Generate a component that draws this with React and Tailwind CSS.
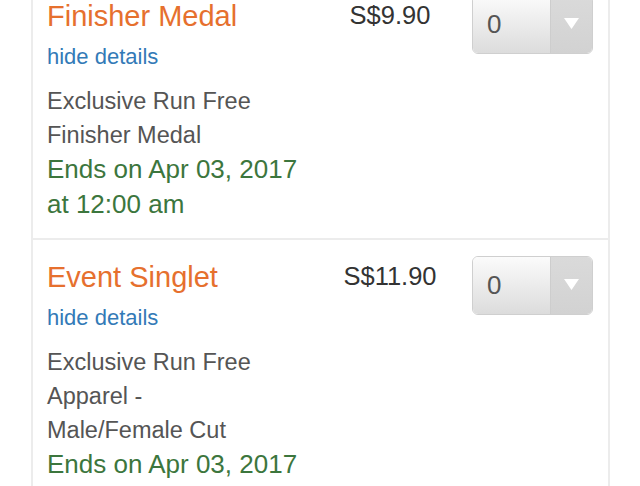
import React from "react";

function Select() {
  return (
    <div className="flex h-[59px] w-[121px] overflow-hidden rounded-[6px] border border-[#cfcfcf]">
      <div className="flex flex-1 items-center bg-gradient-to-b from-[#fbfbfb] to-[#dcdcdc] pl-[14px] text-[26px] text-[#555]">
        <span>0</span>
      </div>
      <div className="flex w-[42px] justify-center border-l border-[#cdcdcd] bg-gradient-to-b from-[#dadada] to-[#d2d2d2] pt-[22px]">
        <svg width="15" height="11" viewBox="0 0 15 11">
          <polygon points="0,0 15,0 7.5,11" fill="#ffffff" />
        </svg>
      </div>
    </div>
  );
}

function Row({ title, price, desc, ends, first }) {
  return (
    <div className={`flex pl-[14px] pr-[15px] pt-[20px] pb-[16px] ${first ? "border-b-2 border-[#ececec]" : ""}`}>
      <div className="min-w-0 flex-1 pr-[20px]">
        <div className="text-[29px] leading-[34px] text-[#e6702e]">{title}</div>
        <div className="mt-[9px] text-[22px] leading-[30px] text-[#337ab7]">hide details</div>
        <div className="mt-[12px] text-[23.5px] leading-[34px] text-[#555]">{desc}</div>
        <div className="text-[26px] leading-[35px] text-[#3c763d]">{ends}</div>
      </div>
      <div className="mt-[1px] w-[120px] shrink-0 text-center text-[25.5px] leading-[30px] text-[#333]">{price}</div>
      <div className="ml-[22px] -mt-[4px] shrink-0">
        <Select />
      </div>
    </div>
  );
}

export default function App() {
  return (
    <div
      className="h-[486px] w-[640px] overflow-hidden bg-white"
      style={{ fontFamily: '"Liberation Sans", Arial, sans-serif' }}
    >
      <div className="relative h-[486px] w-[640px]">
        <div className="absolute left-0 top-0 z-10 h-px w-full bg-[#b0b0b0]" />
        <div className="ml-[31px] -mt-[21px] w-[579px] border-x-2 border-[#ececec]">
          <Row
            first
            title="Finisher Medal"
            price="S$9.90"
            desc={<>Exclusive Run Free<br />Finisher Medal</>}
            ends={<>Ends on Apr 03, 2017<br />at 12:00 am</>}
          />
          <Row
            title="Event Singlet"
            price="S$11.90"
            desc={<>Exclusive Run Free<br />Apparel -<br />Male/Female Cut</>}
            ends={<>Ends on Apr 03, 2017<br />at 12:00 am</>}
          />
        </div>
      </div>
    </div>
  );
}
